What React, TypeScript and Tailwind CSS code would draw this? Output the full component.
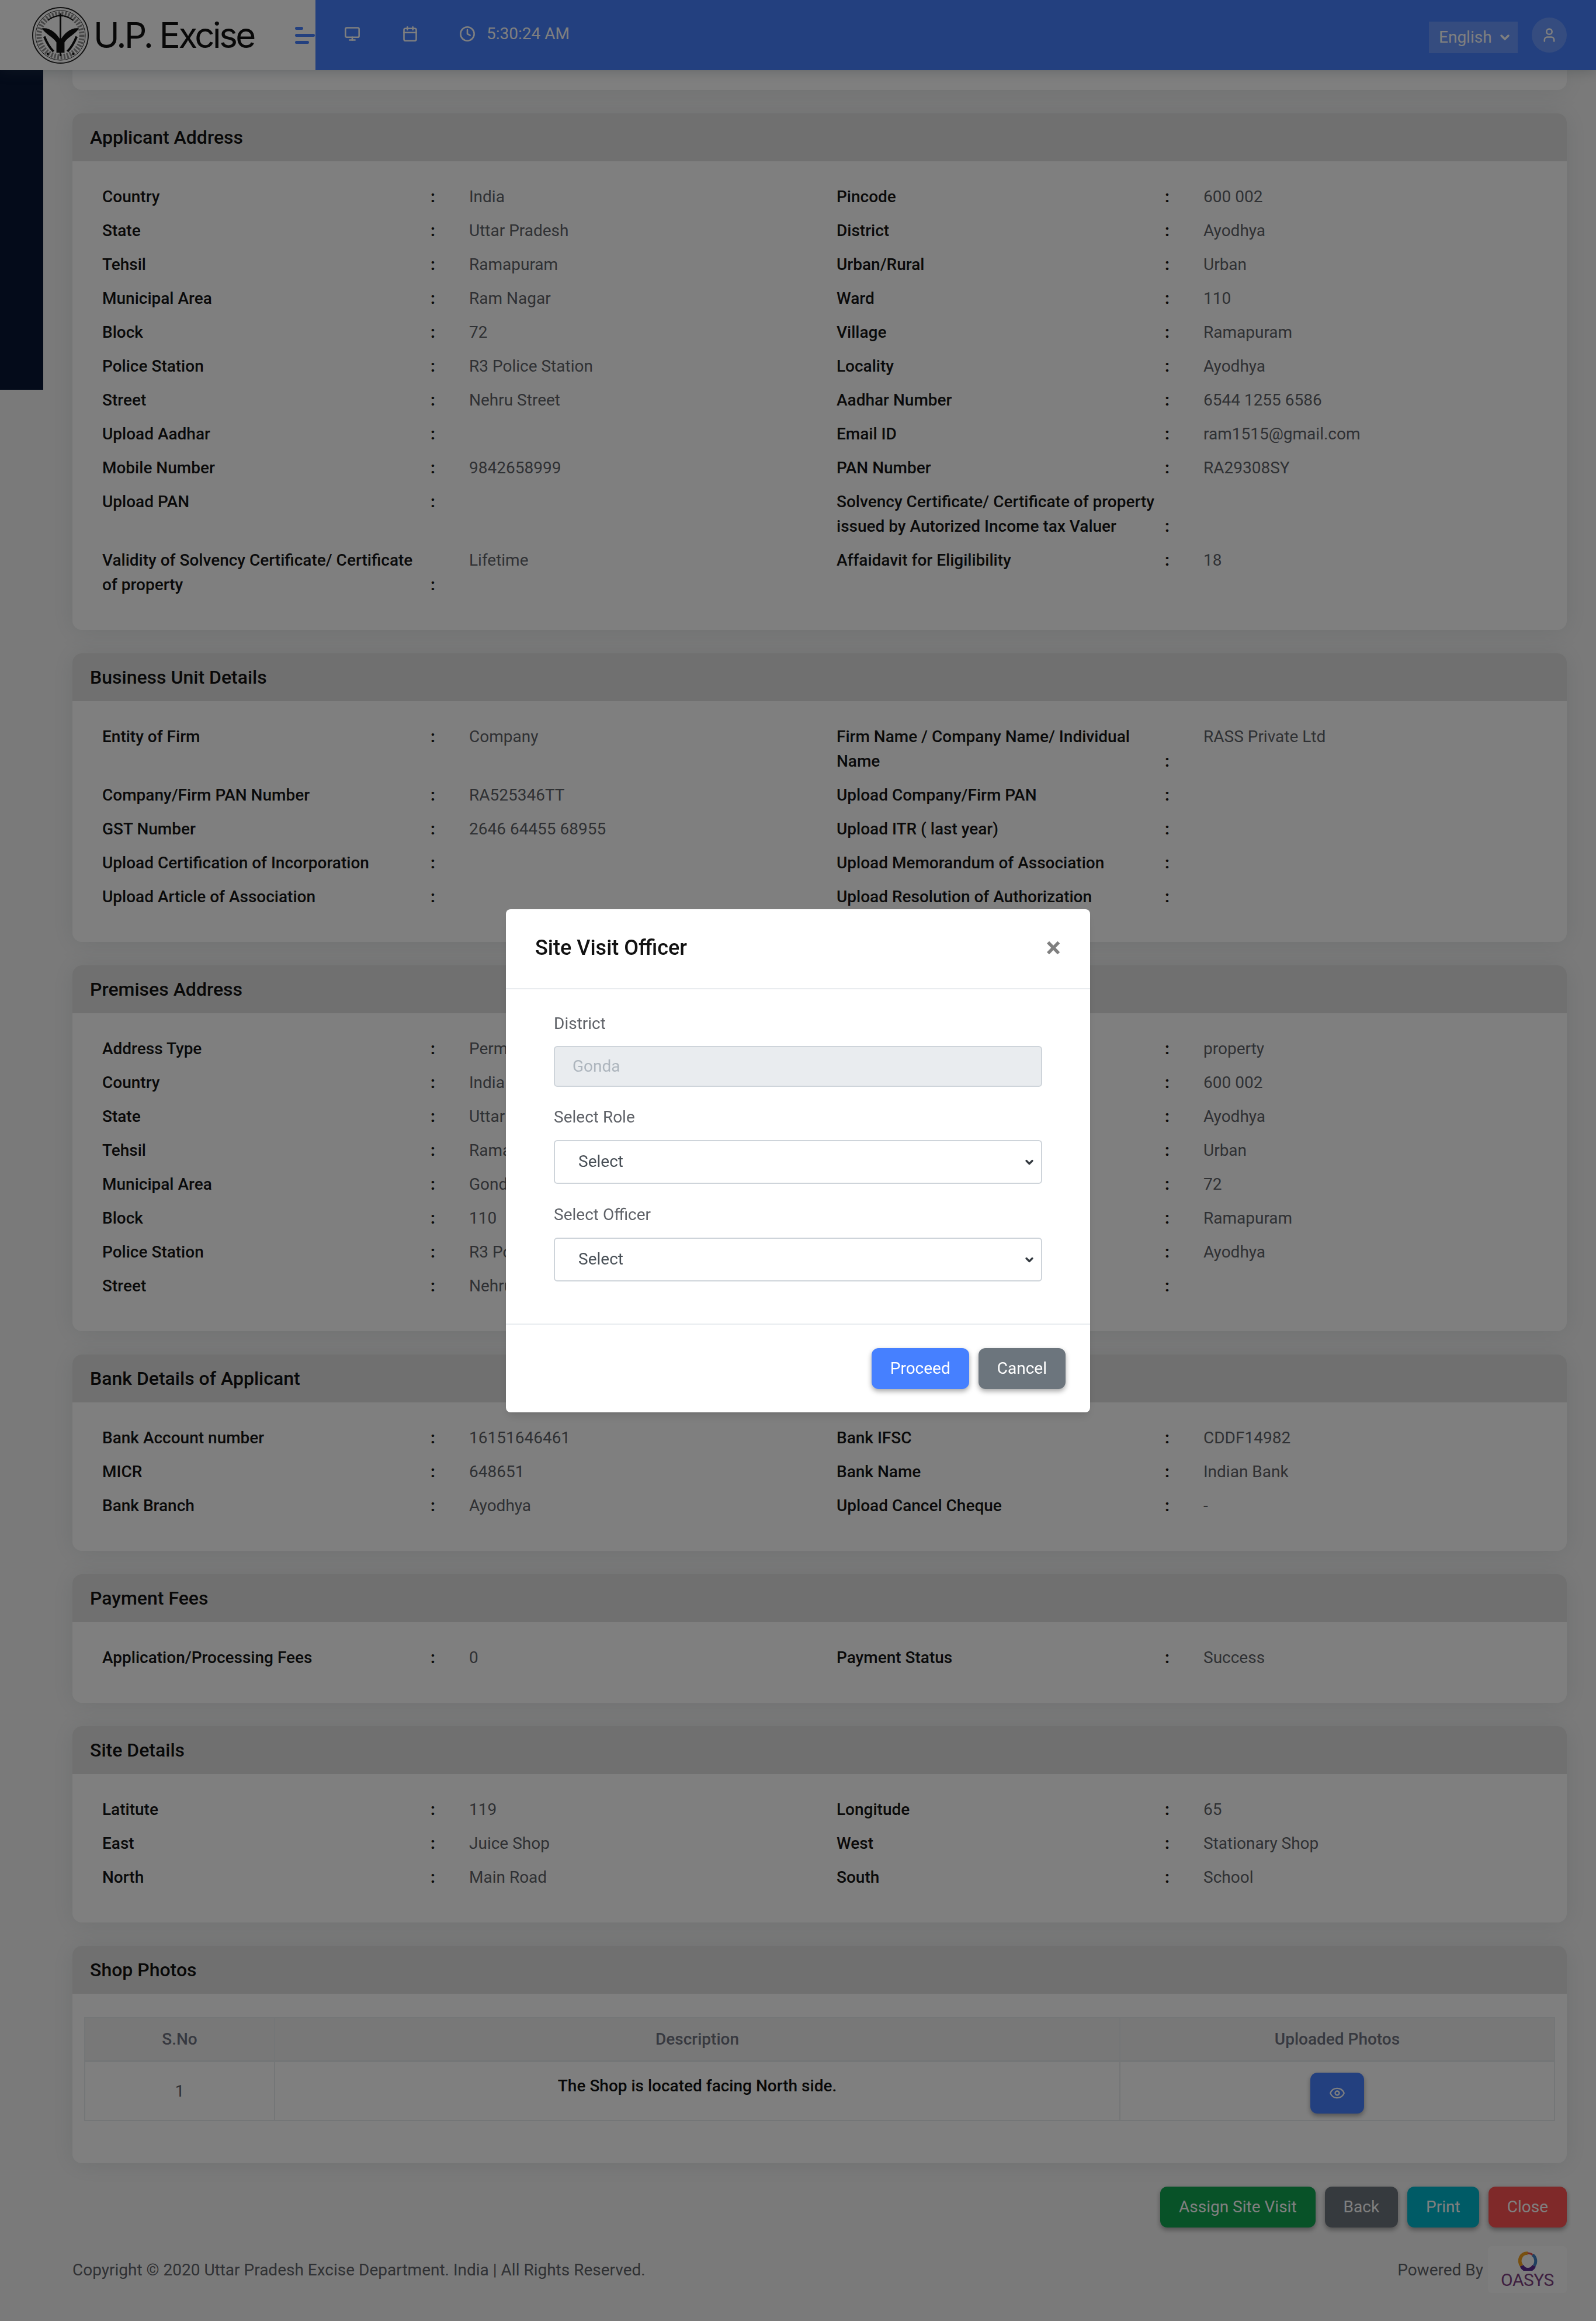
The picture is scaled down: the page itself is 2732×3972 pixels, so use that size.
import React from "react";
import { Monitor, Calendar, Clock, User, Eye, ChevronDown } from "lucide-react";

type Item = [string, string];

function Field({ item }: { item: Item }) {
  return (
    <div className="flex items-start mb-4">
      <div className="flex items-end w-[628px] shrink-0">
        <div className="w-[562px] shrink-0 font-medium text-[#151515]">{item[0]}</div>
        <div className="font-bold text-[#151515]">:</div>
      </div>
      <div className="text-[#5f6268]">{item[1]}</div>
    </div>
  );
}

function Section({ title, items }: { title: string; items: Item[] }) {
  return (
    <section className="bg-white rounded-2xl shadow-[0_2px_40px_0_rgba(69,90,100,0.12)]">
      <h2 className="h-[82px] bg-[#e0e0e0] rounded-t-2xl pl-[30px] flex items-center text-[32px] font-medium text-[#111]">{title}</h2>
      <div className="pt-10 pb-10 pl-[51px] grid grid-cols-[1257px_1fr] items-start">
        {items.map((it, i) => (
          <Field key={i} item={it} />
        ))}
      </div>
    </section>
  );
}

const applicant: Item[] = [
  ["Country", "India"], ["Pincode", "600 002"],
  ["State", "Uttar Pradesh"], ["District", "Ayodhya"],
  ["Tehsil", "Ramapuram"], ["Urban/Rural", "Urban"],
  ["Municipal Area", "Ram Nagar"], ["Ward", "110"],
  ["Block", "72"], ["Village", "Ramapuram"],
  ["Police Station", "R3 Police Station"], ["Locality", "Ayodhya"],
  ["Street", "Nehru Street"], ["Aadhar Number", "6544 1255 6586"],
  ["Upload Aadhar", ""], ["Email ID", "ram1515@gmail.com"],
  ["Mobile Number", "9842658999"], ["PAN Number", "RA29308SY"],
  ["Upload PAN", ""], ["Solvency Certificate/ Certificate of property issued by Autorized Income tax Valuer", ""],
  ["Validity of Solvency Certificate/ Certificate of property", "Lifetime"], ["Affaidavit for Eligilibility", "18"],
];
const business: Item[] = [
  ["Entity of Firm", "Company"], ["Firm Name / Company Name/ Individual Name", "RASS Private Ltd"],
  ["Company/Firm PAN Number", "RA525346TT"], ["Upload Company/Firm PAN", ""],
  ["GST Number", "2646 64455 68955"], ["Upload ITR ( last year)", ""],
  ["Upload Certification of Incorporation", ""], ["Upload Memorandum of Association", ""],
  ["Upload Article of Association", ""], ["Upload Resolution of Authorization", ""],
];
const premises: Item[] = [
  ["Address Type", "Permanent"], ["Premises Type", "property"],
  ["Country", "India"], ["Pincode", "600 002"],
  ["State", "Uttar Pradesh"], ["District", "Ayodhya"],
  ["Tehsil", "Ramapuram"], ["Urban/Rural", "Urban"],
  ["Municipal Area", "Gonda"], ["Ward", "72"],
  ["Block", "110"], ["Village", "Ramapuram"],
  ["Police Station", "R3 Police Station"], ["Locality", "Ayodhya"],
  ["Street", "Nehru Street"], ["Landmark", ""],
];
const bank: Item[] = [
  ["Bank Account number", "16151646461"], ["Bank IFSC", "CDDF14982"],
  ["MICR", "648651"], ["Bank Name", "Indian Bank"],
  ["Bank Branch", "Ayodhya"], ["Upload Cancel Cheque", "-"],
];
const payment: Item[] = [
  ["Application/Processing Fees", "0"], ["Payment Status", "Success"],
];
const site: Item[] = [
  ["Latitute", "119"], ["Longitude", "65"],
  ["East", "Juice Shop"], ["West", "Stationary Shop"],
  ["North", "Main Road"], ["South", "School"],
];

function Emblem() {
  return (
    <svg viewBox="0 0 100 100" className="w-[99px] h-[99px] shrink-0">
      <circle cx="50" cy="50" r="48" fill="none" stroke="#222" strokeWidth="2" />
      <circle cx="50" cy="50" r="43" fill="none" stroke="#222" strokeWidth="1" />
      <circle cx="50" cy="50" r="37" fill="none" stroke="#333" strokeWidth="9" strokeDasharray="3 2.5" opacity="0.55" />
      <path d="M50 12 L50 86" stroke="#111" strokeWidth="3" />
      <path d="M28 24 Q50 8 72 24" fill="none" stroke="#111" strokeWidth="2" />
      <path d="M18 38 C30 36 42 44 50 58 C58 44 70 36 82 38 C76 48 64 52 57 62 L57 80 L43 80 L43 62 C36 52 24 48 18 38 Z" fill="#111" />
      <path d="M22 52 C26 62 30 70 38 78 M78 52 C74 62 70 70 62 78" fill="none" stroke="#111" strokeWidth="4" />
      <circle cx="28" cy="82" r="2" fill="#111" />
      <circle cx="72" cy="82" r="2" fill="#111" />
    </svg>
  );
}

function FormSelect() {
  return (
    <div className="relative mb-8">
      <select className="block w-full h-[75px] appearance-none bg-white border-2 border-[#ced4da] rounded-md pl-[40px] text-[#495057] text-[28px]">
        <option>Select</option>
      </select>
      <ChevronDown className="absolute right-[12px] top-[28px] text-[#343a40]" size={20} strokeWidth={4} />
    </div>
  );
}

function ActionButton({ label, color }: { label: string; color: string }) {
  return (
    <button className={`h-[70px] px-[32px] rounded-xl text-white shadow-[0_4px_8px_rgba(0,0,0,0.35)] ${color}`}>{label}</button>
  );
}

export default function App() {
  return (
    <div className="h-[3972px] overflow-hidden bg-[#f5f5f5] font-[Roboto,sans-serif] text-[28px] leading-[42px]">
      <header className="relative z-10 h-[120px] flex bg-[#4680ff] shadow-[0_2px_20px_rgba(69,90,100,0.3)]">
        <div className="w-[540px] bg-white flex items-center pl-[54px] pt-[0px]">
          <Emblem />
          <span className="ml-[7px] font-[Inter,sans-serif] text-[60px] leading-none tracking-[-3.5px] text-[#111]">U.P. Excise</span>
          <div className="ml-[70px] flex flex-col gap-[7px]">
            <span className="block w-[14px] h-[5px] rounded bg-[#4680ff]" />
            <span className="block w-[34px] h-[5px] rounded bg-[#4680ff]" />
            <span className="block w-[24px] h-[5px] rounded bg-[#4680ff]" />
          </div>
        </div>
        <div className="flex-1 flex items-center text-white pl-[49px] pr-[50px] pb-[4px]">
          <Monitor size={28} strokeWidth={2.2} />
          <Calendar size={28} strokeWidth={2.2} className="ml-[71px]" />
          <Clock size={28} strokeWidth={2.2} className="ml-[70px]" />
          <span className="ml-[19px]">5:30:24 AM</span>
          <div className="ml-auto flex items-center gap-6 pt-[4px]">
            <div className="relative w-[152px] h-[54px] bg-white/20 flex items-center pl-[17px] mt-[8px]">
              <select className="appearance-none bg-transparent text-white w-full outline-none">
                <option className="text-black">English</option>
              </select>
              <ChevronDown className="absolute right-[10px] top-[15px]" size={24} strokeWidth={3.5} />
            </div>
            <div className="w-[60px] h-[60px] rounded-full bg-white/20 flex items-center justify-center">
              <User size={28} strokeWidth={2.2} />
            </div>
          </div>
        </div>
      </header>

      <div className="flex">
        <aside className="w-[74px] h-[547px] shrink-0 bg-[#081634]" />
        <main className="flex-1 min-w-0 ml-[50px] mr-[50px]">
          <div className="h-[34px] bg-white rounded-b-2xl shadow-[0_2px_40px_0_rgba(69,90,100,0.12)] mb-10" />
          <div className="flex flex-col gap-10">
            <Section title="Applicant Address" items={applicant} />
            <Section title="Business Unit Details" items={business} />
            <Section title="Premises Address" items={premises} />
            <Section title="Bank Details of Applicant" items={bank} />
            <Section title="Payment Fees" items={payment} />
            <Section title="Site Details" items={site} />
            <section className="bg-white rounded-2xl shadow-[0_2px_40px_0_rgba(69,90,100,0.12)]">
              <h2 className="h-[82px] bg-[#e0e0e0] rounded-t-2xl pl-[30px] flex items-center text-[32px] font-medium text-[#111]">Shop Photos</h2>
              <div className="pt-10 pb-[72px] px-5">
                <table className="w-full border-collapse table-fixed">
                  <thead>
                    <tr className="h-[74px] bg-[#f0f0f0] text-[#6f7280]">
                      <th className="w-[325px] border-2 border-b-4 border-[#e9ecef] font-medium">S.No</th>
                      <th className="w-[1447px] border-2 border-b-4 border-[#e9ecef] font-medium">Description</th>
                      <th className="border-2 border-b-4 border-[#e9ecef] font-medium">Uploaded Photos</th>
                    </tr>
                  </thead>
                  <tbody>
                    <tr className="h-[102px]">
                      <td className="border-2 border-[#e9ecef] text-center text-[#5f6268]">1</td>
                      <td className="border-2 border-[#e9ecef] text-center align-top pt-[20px] font-medium text-[#111]">The Shop is located facing North side.</td>
                      <td className="border-2 border-[#e9ecef] text-center">
                        <button className="w-[92px] h-[70px] mt-[6px] rounded-xl bg-[#4680ff] text-white inline-flex items-center justify-center shadow-[0_4px_8px_rgba(0,0,0,0.35)]">
                          <Eye size={28} strokeWidth={2} />
                        </button>
                      </td>
                    </tr>
                  </tbody>
                </table>
              </div>
            </section>
          </div>

          <div className="mt-10 flex justify-end gap-4">
            <ActionButton label="Assign Site Visit" color="bg-[#10a450]" />
            <ActionButton label="Back" color="bg-[#6c757d]" />
            <ActionButton label="Print" color="bg-[#00b6cc]" />
            <ActionButton label="Close" color="bg-[#ff5252]" />
          </div>

          <footer className="mt-8 flex items-center justify-between text-[#5f6268]">
            <span className="pt-[2px]">Copyright © 2020 Uttar Pradesh Excise Department. India | All Rights Reserved.</span>
            <div className="flex items-center gap-2">
              <span className="pt-[2px]">Powered By</span>
              <div className="w-[135px] h-[80px] bg-[#fbfbfb] rounded-md flex flex-col items-center pt-[8px]">
                <svg viewBox="0 0 40 40" className="w-[36px] h-[34px] shrink-0">
                  <path d="M20 5 A14 15 0 0 0 8 30" fill="none" stroke="#f0a020" strokeWidth="7" />
                  <path d="M8 30 A14 15 0 0 0 33 30" fill="none" stroke="#5a2a90" strokeWidth="8" />
                  <path d="M33 30 A14 15 0 0 0 30 8" fill="none" stroke="#3f7fc0" strokeWidth="6" />
                  <path d="M30 8 A14 15 0 0 0 20 5" fill="none" stroke="#e05050" strokeWidth="4" />
                </svg>
                <span className="text-[30px] leading-[32px] tracking-[-0.5px] text-[#7d3f80] font-normal">OASYS</span>
              </div>
            </div>
          </footer>
        </main>
      </div>

      <div className="fixed inset-0 z-50 bg-black/50 flex items-center justify-center">
        <div className="w-[1000px] bg-white rounded-lg shadow-lg">
          <div className="h-[137px] border-b-2 border-[#e9ecef] flex items-center justify-between pl-[50px] pr-[50px] pb-[2px]">
            <h3 className="text-[36px] font-medium text-[#111]">Site Visit Officer</h3>
            <span className="text-[48px] leading-none font-bold text-[#808080]">×</span>
          </div>
          <div className="h-[572px] pt-[38px] px-[82px] text-[#5f6268]">
            <label className="block mb-[17px]">District</label>
            <div className="h-[70px] mb-[31px] bg-[#e9ecef] border-2 border-[#ced4da] rounded-md flex items-center pl-[30px] text-[#adb5bd]">Gonda</div>
            <label className="block mb-[18px]">Select Role</label>
            <FormSelect />
            <label className="block mb-[18px]">Select Officer</label>
            <FormSelect />
          </div>
          <div className="border-t-2 border-[#e9ecef] h-[152px] flex justify-end items-start gap-4 pt-[40px] pr-[42px]">
            <ActionButton label="Proceed" color="bg-[#4680ff]" />
            <ActionButton label="Cancel" color="bg-[#6c757d]" />
          </div>
        </div>
      </div>
    </div>
  );
}
